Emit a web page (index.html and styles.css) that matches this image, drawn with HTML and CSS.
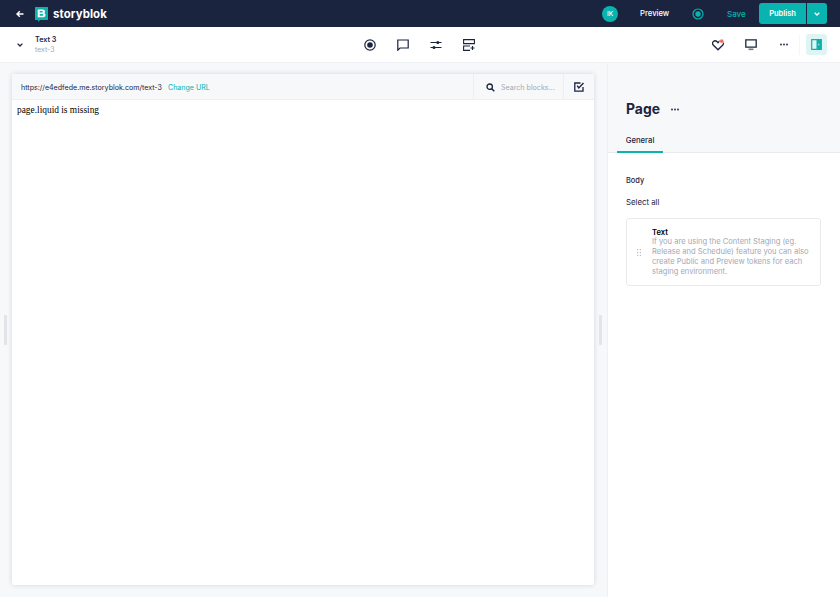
FILE: index.html
```html
<!DOCTYPE html>
<html lang="en">
<head>
<meta charset="utf-8">
<title>Storyblok</title>
<link rel="stylesheet" href="styles.css">
</head>
<body>
<header class="topbar">
  <div class="topbar-left">
    <svg class="back" width="8" height="8" viewBox="0 0 8 8"><path d="M7.5 4H1.2M3.8 1.3 1 4l2.800 2.700" fill="none" stroke="#fff" stroke-width="1.400"/></svg>
    <svg class="logo" width="13" height="15" viewBox="0 0 13 15"><path d="M.5 0h12a.5.5 0 0 1 .5.5v12a.5.5 0 0 1-.5.5H5l-2 2v-2H.5a.5.5 0 0 1-.5-.5V.5A.5.5 0 0 1 .5 0z" fill="#09b3af"/><path d="M2.700 2.500h4.900c1.500 0 2.400.8 2.400 2 0 .8-.4 1.300-1 1.600.9.300 1.400 1 1.400 1.900 0 1.500-1 2.300-2.700 2.300H2.700V2.500zM4.700 4.100v1.500h2.400c.5 0 .8-.3.8-.8s-.3-.7-.8-.7H4.700zm0 3v1.600h2.700c.6 0 .9-.3.9-.8s-.3-.8-.9-.8H4.700z" fill="#fff" fill-rule="evenodd"/></svg>
    <span class="brand">storyblok</span>
  </div>
  <div class="topbar-right">
    <span class="avatar">IK</span>
    <span class="preview">Preview</span>
    <svg class="live" width="12" height="12" viewBox="0 0 12 12"><circle cx="6" cy="6" r="5" fill="none" stroke="#09b3af" stroke-width="1.200"/><circle cx="6" cy="6" r="2.700" fill="#09b3af"/></svg>
    <span class="save">Save</span>
    <div class="publish">
      <span class="publish-main">Publish</span>
      <span class="publish-caret"><svg width="6" height="4" viewBox="0 0 6 4"><path d="M.7.700 3 3l2.300-2.300" fill="none" stroke="#fff" stroke-width="1.300"/></svg></span>
    </div>
  </div>
</header>

<div class="toolbar">
  <div class="story">
    <svg class="story-caret" width="6" height="4" viewBox="0 0 6 4"><path d="M.6.600 3 3l2.400-2.400" fill="none" stroke="#1b243f" stroke-width="1.300"/></svg>
    <div class="story-text">
      <div class="story-name">Text 3</div>
      <div class="story-slug">text-3</div>
    </div>
  </div>
  <div class="tools">
    <svg width="12" height="12" viewBox="0 0 12 12"><circle cx="6" cy="6" r="5.200" fill="none" stroke="#1b243f" stroke-width="1.200"/><circle cx="6" cy="6" r="2.800" fill="#1b243f"/></svg>
    <svg width="12" height="12" viewBox="0 0 12 12"><path d="M.8 1h10.400v8H3L.8 11.200z" fill="none" stroke="#1b243f" stroke-width="1.200"/></svg>
    <svg width="12" height="12" viewBox="0 0 12 12"><path d="M.5 3.500h11M.5 8.500h11" stroke="#1b243f" stroke-width="1.100"/><circle cx="7.800" cy="3.500" r="1.500" fill="#1b243f"/><circle cx="4" cy="8.500" r="1.500" fill="#1b243f"/></svg>
    <svg width="12" height="12" viewBox="0 0 12 12"><path d="M.6.600h10.800v4H.6zM7 7H.6v4.400H7" fill="none" stroke="#1b243f" stroke-width="1.100"/><path d="M9.500 7v4M7.500 9h4" stroke="#1b243f" stroke-width="1.100"/></svg>
  </div>
  <div class="actions">
    <svg class="heart" width="12" height="12" viewBox="0 0 12 12"><path d="M6 10.800 1.400 6.300C.2 5 .3 3.300 1.400 2.400c1.200-.9 3.200-.6 4.600 1.200 1.400-1.800 3.400-2.100 4.600-1.200 1.100.9 1.200 2.600 0 3.900z" fill="none" stroke="#1b243f" stroke-width="1.300"/><circle cx="9.700" cy="2.200" r="2.100" fill="#f0695f" stroke="#fff" stroke-width=".6"/></svg>
    <svg class="monitor" width="12" height="12" viewBox="0 0 12 12"><path d="M.8.800h10.400v7.400H.8z" fill="none" stroke="#1b243f" stroke-width="1.300"/><path d="M3.500 10.300h5" stroke="#737889" stroke-width="1.600"/></svg>
    <svg width="8" height="3" viewBox="0 0 8 3"><circle cx="1" cy="1.500" r=".9" fill="#1b243f"/><circle cx="4" cy="1.500" r=".9" fill="#1b243f"/><circle cx="7" cy="1.500" r=".9" fill="#1b243f"/></svg>
    <span class="divider"></span>
    <span class="panel-toggle"><svg width="11" height="11" viewBox="0 0 11 11"><path d="M.7.700h9.600v9.600H.7z" fill="none" stroke="#09b3af" stroke-width="1.200"/><path d="M5.500.700h4.800v9.600H5.500z" fill="#09b3af"/><path d="M7 5.500l1.200-1.200v2.400z" fill="#dff5f4"/></svg></span>
  </div>
</div>

<main class="workspace">
  <section class="canvas">
    <span class="handle handle-left"></span>
    <div class="frame">
      <div class="frame-bar">
        <div class="url">
          <span class="url-text">https://e4edfede.me.storyblok.com/text-3</span>
          <span class="url-link">Change URL</span>
        </div>
        <div class="search">
          <svg width="9" height="9" viewBox="0 0 9 9"><circle cx="3.700" cy="3.700" r="2.700" fill="none" stroke="#1b243f" stroke-width="1.300"/><path d="M5.700 5.700 8.300 8.300" stroke="#1b243f" stroke-width="1.500"/></svg>
          <span>Search blocks...</span>
        </div>
        <div class="check">
          <svg width="10" height="10" viewBox="0 0 10 10"><path d="M6.500 1H.8v8.200H9V5" fill="none" stroke="#1b243f" stroke-width="1.300"/><path d="M3.200 3.600 4.800 6 9.500 1" fill="none" stroke="#1b243f" stroke-width="1.400"/></svg>
        </div>
      </div>
      <div class="frame-body">page.liquid is missing</div>
    </div>
    <span class="handle handle-right"></span>
  </section>
  <aside class="side">
    <div class="side-head">
      <div class="side-title">
        <h1>Page</h1>
        <svg width="8" height="3" viewBox="0 0 8 3"><circle cx="1" cy="1.500" r=".9" fill="#1b243f"/><circle cx="4" cy="1.500" r=".9" fill="#1b243f"/><circle cx="7" cy="1.500" r=".9" fill="#1b243f"/></svg>
      </div>
      <div class="tab">General</div>
    </div>
    <div class="side-body">
      <div class="label">Body</div>
      <div class="select-all">Select all</div>
      <div class="card">
        <svg class="grip" width="4" height="7" viewBox="0 0 4 7"><g fill="#b9bdc8"><rect width="1.200" height="1.200"/><rect x="2.800" width="1.200" height="1.200"/><rect y="2.900" width="1.200" height="1.200"/><rect x="2.800" y="2.900" width="1.200" height="1.200"/><rect y="5.800" width="1.200" height="1.200"/><rect x="2.800" y="5.800" width="1.200" height="1.200"/></g></svg>
        <div class="card-text">
          <div class="card-title">Text</div>
          <p class="card-desc">If you are using the Content Staging (eg. Release and Schedule) feature you can also create Public and Preview tokens for each staging environment.</p>
        </div>
      </div>
    </div>
  </aside>
</main>
</body>
</html>
```

FILE: styles.css
```css
* { box-sizing: border-box; }
html, body { margin: 0; height: 100%; }
body {
  width: 840px;
  height: 597px;
  overflow: hidden;
  display: flex;
  flex-direction: column;
  font-family: Inter, "Noto Sans", sans-serif;
  color: #1b243f;
  background: #fff;
}
.topbar {
  height: 27px;
  flex: none;
  background: #1b243f;
  display: flex;
  align-items: center;
  justify-content: space-between;
  padding: 0 13px 0 16px;
  color: #fff;
}
.topbar-left, .topbar-right { display: flex; align-items: center; }
.logo { margin-left: 11px; margin-top: 2px; }
.brand { margin-left: 5px; font-size: 11.400px; font-weight: 700; letter-spacing: .1px; }
.avatar {
  width: 16px; height: 16px; border-radius: 50%;
  background: #09b3af; font-size: 6.500px; font-weight: 500;
  display: flex; align-items: center; justify-content: center;
}
.preview { margin-left: 22px; width: 29px; white-space: nowrap; font-size: 7.700px; font-weight: 500; }
.live { margin-left: 23px; }
.save { margin-left: 23px; width: 18px; font-size: 8px; font-weight: 500; color: #09b3af; }
.publish { display: flex; height: 21px; margin-left: 14px; font-size: 7.500px; font-weight: 600; }
.publish-main {
  width: 47px; background: #09b3af; border-radius: 3px 0 0 3px;
  display: flex; align-items: center; justify-content: center;
}
.publish-caret {
  width: 20px; margin-left: 1px; background: #09b3af; border-radius: 0 3px 3px 0;
  display: flex; align-items: center; justify-content: center;
}
.toolbar {
  height: 36px;
  flex: none;
  display: grid;
  grid-template-columns: 1fr auto 1fr;
  align-items: center;
  padding: 0 13px 0 17px;
  border-bottom: 1px solid #eff0f3;
  background: #fff;
}
.story { display: flex; align-items: center; }
.story-text { margin-left: 12px; }
.story-name { font-size: 7.200px; font-weight: 600; line-height: 10px; }
.story-slug { font-size: 6.900px; color: #a3a7b5; line-height: 9px; }
.tools { display: flex; gap: 20.700px; align-items: center; margin-left: -5px; }
.actions { display: flex; align-items: center; justify-content: flex-end; }
.actions svg { flex: none; }
.heart { margin-right: 21px; }
.monitor { margin-right: 23px; }
.divider { width: 1px; height: 20px; background: #f4f5f7; margin: 0 6px 0 11px; }
.panel-toggle {
  width: 21px; height: 21px; background: #dff5f4; border-radius: 3px;
  display: flex; align-items: center; justify-content: center;
}
.workspace { flex: 1; min-height: 0; display: flex; position: relative; }
.canvas {
  width: 607px; flex: none; background: #f7f8fa;
  padding: 11px 13px 12px 12px;
  display: flex;
}
.frame {
  flex: 1; display: flex; flex-direction: column;
  background: #fff; border-radius: 2px;
  box-shadow: 0 0 5px rgba(27, 36, 63, .16);
}
.frame-bar {
  height: 26px; flex: none; display: flex; align-items: stretch;
  background: #f7f8fa; border-bottom: 1px solid #eceef1; border-radius: 2px 2px 0 0;
}
.url { flex: 1; display: flex; align-items: center; padding: 1px 0 0 9px; font-size: 7.100px; gap: 6px; }
.url-text { color: #1b243f; }
.url-link { color: #09b3af; }
.search {
  width: 90px; display: flex; align-items: center; gap: 6px; padding: 1px 0 0 12px;
  border-left: 1px solid #eceef1; font-size: 7.100px; color: #a3a7b5; white-space: nowrap;
}
.check {
  width: 31px; display: flex; align-items: center; justify-content: center;
  border-left: 1px solid #eceef1;
}
.frame-body {
  flex: 1; padding: 4px 5px; font-family: "Liberation Serif", serif;
  font-size: 9.400px; color: #000; line-height: 12px;
}
.handle {
  position: absolute; top: 252px; width: 3px; height: 30px;
  background: #e3e4e7; border-radius: 1px;
}
.handle-left { left: 4px; }
.handle-right { left: 599px; }
.side { flex: 1; border-left: 1px solid #eff0f3; display: flex; flex-direction: column; }
.side-head { height: 90px; flex: none; background: #f7f8fa; border-bottom: 1px solid #e9eaee; position: relative; }
.side-title { display: flex; align-items: center; padding: 36px 0 0 18px; gap: 11px; }
.side-title h1 { margin: 0; font-size: 13.900px; line-height: 20px; font-weight: 700; }
.tab {
  position: absolute; left: 9px; bottom: -1px; width: 46px; height: 22px;
  display: flex; align-items: flex-start; justify-content: center; padding-top: 5px;
  font-size: 7.700px; font-weight: 500; border-bottom: 2px solid #09b3af;
}
.side-body { padding: 22px 18px 0; }
.label { font-size: 7.400px; font-weight: 500; line-height: 12px; }
.select-all { margin-top: 9px; font-size: 7.800px; color: #1b243f; line-height: 12px; }
.card {
  margin-top: 10px; width: 195px; height: 68px;
  border: 1px solid #e9eaee; border-radius: 3px;
  display: flex; align-items: center; padding: 0 10px; gap: 11px; background: #fff;
}
.grip { flex: none; }
.card-title { font-size: 7.600px; font-weight: 600; color: #000; line-height: 9px; }
.card-desc { margin: 0; font-size: 7.570px; line-height: 10px; color: #a3a7b5; }
```
